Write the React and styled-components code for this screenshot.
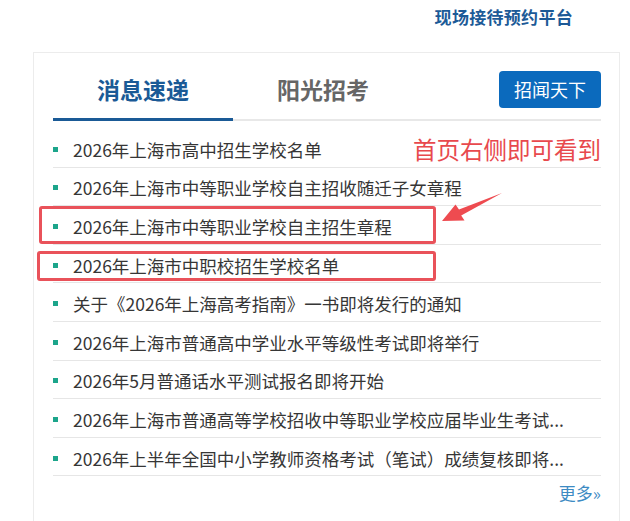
import React from "react";
import styled, { createGlobalStyle } from "styled-components";

const GlobalStyle = createGlobalStyle`
  html, body {
    margin: 0;
    padding: 0;
    background: #fff;
    overflow: hidden;
  }
  body {
    font-family: "Microsoft YaHei", "Noto Sans CJK SC", "Noto Sans", sans-serif;
  }
`;

const news = [
  "2026年上海市高中招生学校名单",
  "2026年上海市中等职业学校自主招收随迁子女章程",
  "2026年上海市中等职业学校自主招生章程",
  "2026年上海市中职校招生学校名单",
  "关于《2026年上海高考指南》一书即将发行的通知",
  "2026年上海市普通高中学业水平等级性考试即将举行",
  "2026年5月普通话水平测试报名即将开始",
  "2026年上海市普通高等学校招收中等职业学校应届毕业生考试...",
  "2026年上半年全国中小学教师资格考试（笔试）成绩复核即将...",
];

export default function App() {
  return (
    <Page>
      <GlobalStyle />
      <TopBar>
        <PlatformLink>现场接待预约平台</PlatformLink>
      </TopBar>
      <Card>
        <TabBar>
          <Tab active>消息速递</Tab>
          <Tab>阳光招考</Tab>
          <NewsButton>招闻天下</NewsButton>
        </TabBar>
        <NewsList>
          {news.map((title) => (
            <NewsItem key={title}>
              <Bullet />
              <NewsTitle>{title}</NewsTitle>
            </NewsItem>
          ))}
        </NewsList>
        <MoreRow>
          <MoreLink>更多»</MoreLink>
        </MoreRow>
      </Card>

      {/* annotation layer */}
      <Note>首页右侧即可看到</Note>
      <Mark style={{ left: 39, top: 206, width: 397, height: 38 }} />
      <Mark style={{ left: 37, top: 251, width: 399, height: 30 }} />
      <Arrow viewBox="0 0 70 40" width="70" height="40">
        <polygon
          points="4,33 17.5,16.5 21,21.6 64,5 23.2,27.4 26.5,32.5"
          fill="#ee4b50"
        />
      </Arrow>
    </Page>
  );
}

const Page = styled.div`
  position: relative;
  width: 630px;
  height: 521px;
`;

const TopBar = styled.div`
  height: 52px;
  box-sizing: border-box;
  display: flex;
  justify-content: flex-end;
  padding: 5px 57px 0 0;
`;

const PlatformLink = styled.a`
  font-size: 17px;
  line-height: 24px;
  font-weight: 700;
  color: #1c5a97;
  letter-spacing: 0.3px;
`;

const Card = styled.div`
  margin-left: 33px;
  width: 587px;
  height: 469px;
  box-sizing: border-box;
  border: 1px solid #ececec;
  border-bottom: none;
  padding: 0 18px 0 19px;
`;

const TabBar = styled.div`
  display: flex;
  align-items: flex-start;
  border-bottom: 2px solid #e8e8e8;
`;

const Tab = styled.div`
  width: 180px;
  text-align: center;
  padding: 21px 0 14px;
  margin-bottom: -2px;
  font-size: 23px;
  line-height: 30px;
  font-weight: 700;
  color: ${(p) => (p.active ? "#1a5a96" : "#666")};
  border-bottom: 3px solid ${(p) => (p.active ? "#1a5a96" : "transparent")};
`;

const NewsButton = styled.div`
  margin-left: auto;
  margin-top: 18px;
  width: 102px;
  height: 37px;
  border-radius: 4px;
  background: #0b6abd;
  color: #fff;
  font-size: 18px;
  line-height: 37px;
  text-align: center;
`;

const NewsList = styled.ul`
  list-style: none;
  margin: 0;
  padding: 8px 0 0;
`;

const NewsItem = styled.li`
  display: flex;
  align-items: center;
  height: 38.6px;
  box-sizing: border-box;
  padding-top: 3px;
  border-bottom: 1px solid #e6e6e6;
`;

const Bullet = styled.span`
  width: 5px;
  height: 5px;
  background: #1ca58b;
  margin-right: 15px;
  flex-shrink: 0;
`;

const NewsTitle = styled.span`
  font-size: 17.5px;
  color: #363636;
  white-space: nowrap;
`;

const MoreRow = styled.div`
  display: flex;
  justify-content: flex-end;
  padding-top: 7px;
`;

const MoreLink = styled.a`
  font-size: 17px;
  line-height: 20px;
  color: #3d8bc3;
`;

const Note = styled.div`
  position: absolute;
  left: 413px;
  top: 133px;
  font-size: 23.5px;
  line-height: 32px;
  color: #e8494d;
  white-space: nowrap;
`;

const Mark = styled.div`
  position: absolute;
  box-sizing: border-box;
  border: 3px solid #e9525a;
  border-radius: 3px;
`;

const Arrow = styled.svg`
  position: absolute;
  left: 438px;
  top: 188px;
`;
